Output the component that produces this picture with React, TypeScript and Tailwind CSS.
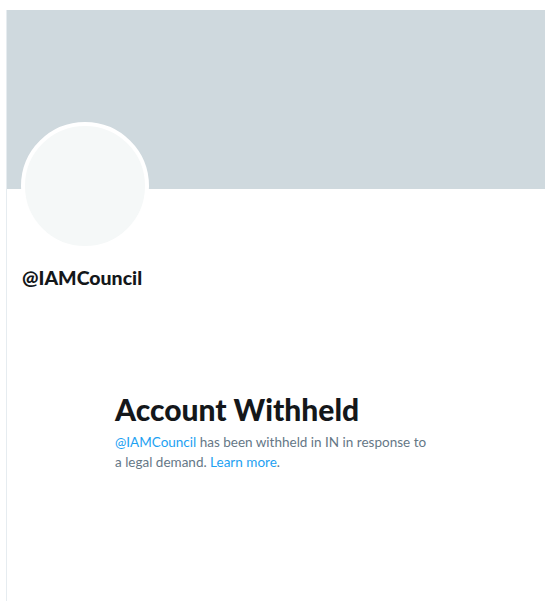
export default function App() {
    return (
        <div className="h-[601px] w-[545px] overflow-hidden bg-white pt-[10px] pl-[6px]" style={{ fontFamily: 'Lato, "Liberation Sans", sans-serif' }}>
            <div className="h-full w-[600px] border-l border-[#e6ecf0]">
                <div className="h-[179px] bg-[#cfd9de]"></div>
                <div className="ml-[14px] -mt-[67px] h-[128px] w-[128px] rounded-full border-4 border-white bg-[#f5f8f8]"></div>
                <div className="ml-[15px] mt-[15px] text-[19.5px] font-black leading-[25px] text-[#14171a]">@IAMCouncil</div>
                <div className="ml-[108px] mt-[101px] w-[320px]">
                    <h1 className="text-[30px] font-black leading-[36px] text-[#14171a]">Account Withheld</h1>
                    <p className="mt-[5px] text-[13.5px] leading-[20px] text-[#657786]">
                        <span className="text-[#1da1f2]">@IAMCouncil</span> has been withheld in IN in response to a legal demand. <span className="text-[#1da1f2]">Learn more</span>.
                    </p>
                </div>
            </div>
        </div>
    );
}
